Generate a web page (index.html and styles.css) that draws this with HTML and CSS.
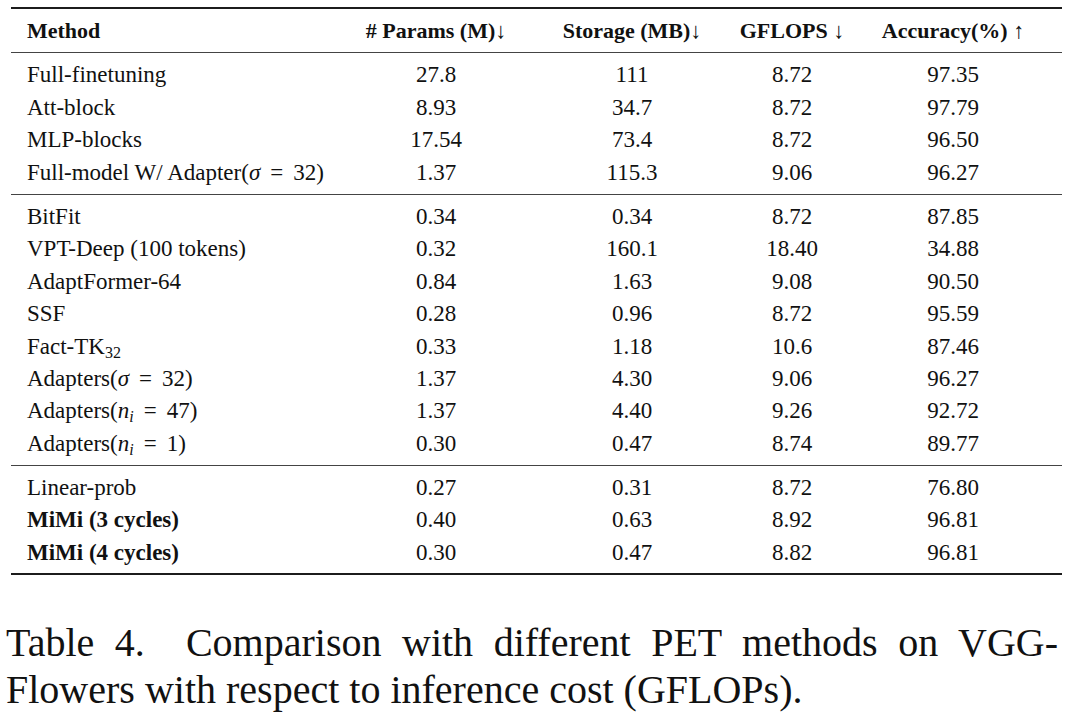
FILE: index.html
```html
<!DOCTYPE html>
<html lang="en">
<head>
<meta charset="utf-8">
<title>Table 4</title>
<link rel="stylesheet" href="styles.css">
</head>
<body>
<div class="page">
  <div class="table">
    <div class="head grid">
      <div class="c first">Method</div>
      <div class="c"># Params (M)↓</div>
      <div class="c">Storage (MB)↓</div>
      <div class="c">GFLOPS ↓</div>
      <div class="c">Accuracy(%) ↑</div>
    </div>
    <div class="section grid">
      <div class="c first">Full-finetuning</div><div class="c">27.8</div><div class="c">111</div><div class="c">8.72</div><div class="c">97.35</div>
      <div class="c first">Att-block</div><div class="c">8.93</div><div class="c">34.7</div><div class="c">8.72</div><div class="c">97.79</div>
      <div class="c first">MLP-blocks</div><div class="c">17.54</div><div class="c">73.4</div><div class="c">8.72</div><div class="c">96.50</div>
      <div class="c first">Full-model W/ Adapter(<i class="m">σ</i><span class="eq">=</span>32)</div><div class="c">1.37</div><div class="c">115.3</div><div class="c">9.06</div><div class="c">96.27</div>
    </div>
    <div class="section grid">
      <div class="c first">BitFit</div><div class="c">0.34</div><div class="c">0.34</div><div class="c">8.72</div><div class="c">87.85</div>
      <div class="c first">VPT-Deep (100 tokens)</div><div class="c">0.32</div><div class="c">160.1</div><div class="c">18.40</div><div class="c">34.88</div>
      <div class="c first">AdaptFormer-64</div><div class="c">0.84</div><div class="c">1.63</div><div class="c">9.08</div><div class="c">90.50</div>
      <div class="c first">SSF</div><div class="c">0.28</div><div class="c">0.96</div><div class="c">8.72</div><div class="c">95.59</div>
      <div class="c first">Fact-TK<sub class="sub">32</sub></div><div class="c">0.33</div><div class="c">1.18</div><div class="c">10.6</div><div class="c">87.46</div>
      <div class="c first">Adapters(<i class="m">σ</i><span class="eq">=</span>32)</div><div class="c">1.37</div><div class="c">4.30</div><div class="c">9.06</div><div class="c">96.27</div>
      <div class="c first">Adapters(<i class="m">n<sub class="sub">i</sub></i><span class="eq">=</span>47)</div><div class="c">1.37</div><div class="c">4.40</div><div class="c">9.26</div><div class="c">92.72</div>
      <div class="c first">Adapters(<i class="m">n<sub class="sub">i</sub></i><span class="eq">=</span>1)</div><div class="c">0.30</div><div class="c">0.47</div><div class="c">8.74</div><div class="c">89.77</div>
    </div>
    <div class="section last grid">
      <div class="c first">Linear-prob</div><div class="c">0.27</div><div class="c">0.31</div><div class="c">8.72</div><div class="c">76.80</div>
      <div class="c first b">MiMi (3 cycles)</div><div class="c">0.40</div><div class="c">0.63</div><div class="c">8.92</div><div class="c">96.81</div>
      <div class="c first b">MiMi (4 cycles)</div><div class="c">0.30</div><div class="c">0.47</div><div class="c">8.82</div><div class="c">96.81</div>
    </div>
  </div>
  <div class="caption">
    <p class="line1">Table 4.&nbsp; Comparison with different PET methods on VGG-</p>
    <p class="line2">Flowers with respect to inference cost (GFLOPs).</p>
  </div>
</div>
</body>
</html>
```

FILE: styles.css
```css
html, body {
  margin: 0;
  padding: 0;
  background: #ffffff;
}

body {
  font-family: "Liberation Serif", "Times New Roman", serif;
  color: #111111;
  width: 1080px;
  height: 723px;
  overflow: hidden;
}

.page {
  padding-top: 7px;
}

.table {
  margin-left: 11px;
  width: 1051px;
  box-sizing: border-box;
  border-top: 2px solid #1c1c1c;
  border-bottom: 2px solid #1c1c1c;
}

.grid {
  display: grid;
  grid-template-columns: 329px 192px 200px 120px 202px;
  padding-right: 8px;
}

.c {
  text-align: center;
  white-space: nowrap;
}

.c.first {
  text-align: left;
  padding-left: 16px;
}

.head {
  font-weight: bold;
  font-size: 22px;
  height: 43px;
  line-height: 43px;
  border-bottom: 1px solid #444444;
}

.section {
  font-size: 23px;
  grid-auto-rows: 32.4px;
  line-height: 32.4px;
  padding-top: 6.4px;
  padding-bottom: 4.6px;
  border-bottom: 1px solid #444444;
}

.section.last {
  border-bottom: none;
  padding-bottom: 3.8px;
}

.b {
  font-weight: bold;
}

.m {
  font-style: italic;
}

.eq {
  margin: 0 10px;
}

.sub {
  font-size: 16px;
  line-height: 0;
  vertical-align: -4px;
  font-style: inherit;
}

.caption {
  margin-top: 44px;
  margin-left: 6px;
  width: 1052px;
  font-size: 40px;
  line-height: 47px;
}

.caption p {
  margin: 0;
}

.line1 {
  text-align: justify;
  text-align-last: justify;
}

.line2 {
  text-align: left;
}
```
